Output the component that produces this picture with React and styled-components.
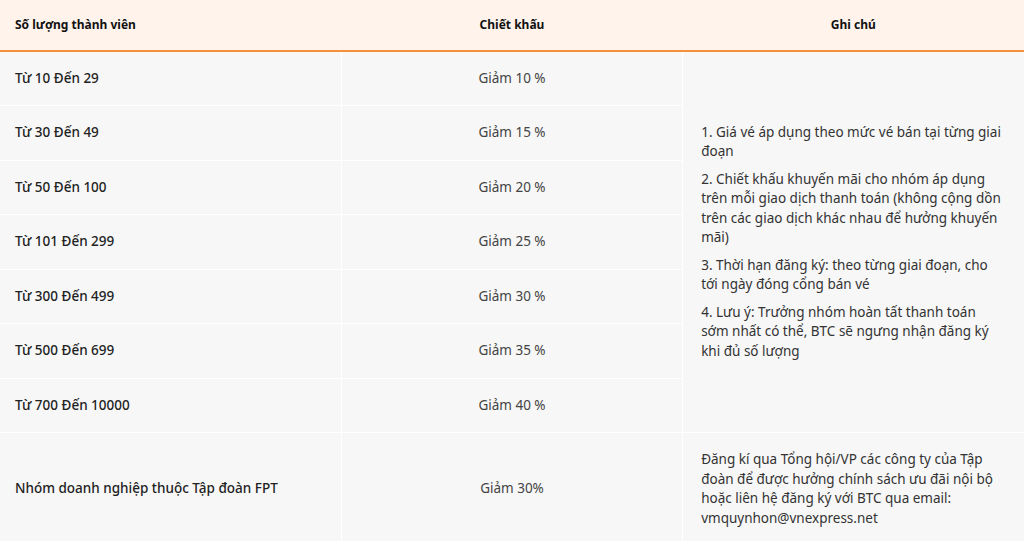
import React from "react";
import styled, { createGlobalStyle } from "styled-components";

const GlobalStyle = createGlobalStyle`
  html, body {
    margin: 0;
    padding: 0;
    background: #f7f7f7;
  }
  body {
    font-family: "Noto Sans", "Open Sans", sans-serif;
  }
`;

const tiers = [
  { range: "Từ 10 Đến 29", discount: "Giảm 10 %" },
  { range: "Từ 30 Đến 49", discount: "Giảm 15 %" },
  { range: "Từ 50 Đến 100", discount: "Giảm 20 %" },
  { range: "Từ 101 Đến 299", discount: "Giảm 25 %" },
  { range: "Từ 300 Đến 499", discount: "Giảm 30 %" },
  { range: "Từ 500 Đến 699", discount: "Giảm 35 %" },
  { range: "Từ 700 Đến 10000", discount: "Giảm 40 %" },
];

const notes = [
  "1. Giá vé áp dụng theo mức vé bán tại từng giai đoạn",
  "2. Chiết khấu khuyến mãi cho nhóm áp dụng trên mỗi giao dịch thanh toán (không cộng dồn trên các giao dịch khác nhau để hưởng khuyến mãi)",
  "3. Thời hạn đăng ký: theo từng giai đoạn, cho tới ngày đóng cổng bán vé",
  "4. Lưu ý: Trưởng nhóm hoàn tất thanh toán sớm nhất có thể, BTC sẽ ngưng nhận đăng ký khi đủ số lượng",
];

const App = () => {
  return (
    <>
      <GlobalStyle />
      <Table>
        <colgroup>
          <col />
          <col />
          <col />
        </colgroup>
        <thead>
          <tr>
            <Th>Số lượng thành viên</Th>
            <Th $center>Chiết khấu</Th>
            <Th $center>Ghi chú</Th>
          </tr>
        </thead>
        <tbody>
          {tiers.map((tier, i) => (
            <tr key={tier.range}>
              <RangeCell>{tier.range}</RangeCell>
              <DiscountCell>{tier.discount}</DiscountCell>
              {i === 0 && (
                <NoteCell rowSpan={tiers.length}>
                  {notes.map((note) => (
                    <Note key={note}>{note}</Note>
                  ))}
                </NoteCell>
              )}
            </tr>
          ))}
          <tr>
            <RangeCell>Nhóm doanh nghiệp thuộc Tập đoàn FPT</RangeCell>
            <DiscountCell>Giảm 30%</DiscountCell>
            <NoteCell>
              Đăng kí qua Tổng hội/VP các công ty của Tập đoàn để được hưởng
              chính sách ưu đãi nội bộ hoặc liên hệ đăng ký với BTC qua email:
              vmquynhon@vnexpress.net
            </NoteCell>
          </tr>
        </tbody>
      </Table>
    </>
  );
};

const Table = styled.table`
  width: 100%;
  table-layout: fixed;
  border-collapse: collapse;
  font-size: 13.5px;
  line-height: 19.5px;
  color: #222;

  col {
    width: 33.333%;
  }
`;

const Th = styled.th`
  background: #fff3eb;
  border-bottom: 2px solid #f6903d;
  padding: 15px 15px;
  font-weight: 700;
  font-size: 12px;
  color: #111;
  text-align: ${(p) => (p.$center ? "center" : "left")};
`;

const Cell = styled.td`
  background: #f7f7f7;
  border: 1px solid #ffffff;
  padding: 17px 15px;
  vertical-align: middle;

  tr:first-child > & {
    border-top: none;
  }
  &:first-child {
    border-left: none;
  }
  &:last-child {
    border-right: none;
  }
`;

const RangeCell = styled(Cell)`
  font-weight: 500;
  color: #222;
`;

const DiscountCell = styled(Cell)`
  text-align: center;
  color: #444;
`;

const NoteCell = styled(Cell)`
  padding: 17px 18px;
  color: #333;
`;

const Note = styled.p`
  margin: 0 0 8px;

  &:last-child {
    margin-bottom: 0;
  }
`;

export default App;
